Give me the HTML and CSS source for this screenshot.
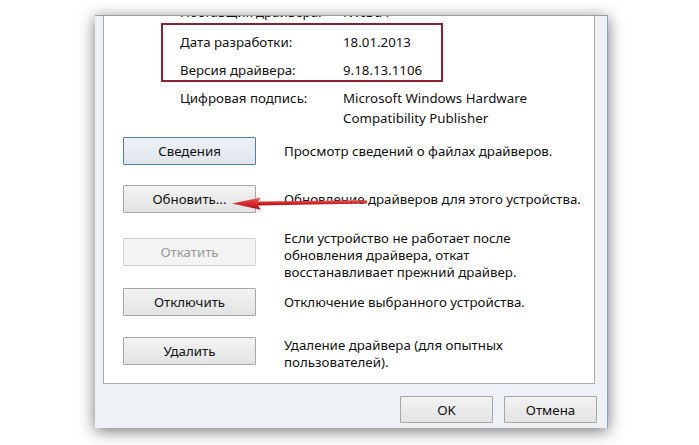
FILE: index.html
```html
<!DOCTYPE html>
<html lang="ru">
<head>
<meta charset="utf-8">
<title>Драйвер</title>
<link rel="stylesheet" href="styles.css">
</head>
<body>
<div class="window">
  <div class="panel">
    <div class="info">
      <div class="row cut"><span class="lbl">Поставщик драйвера:</span><span class="val">NVIDIA</span></div>
      <div class="highlight">
        <div class="row"><span class="lbl">Дата разработки:</span><span class="val">18.01.2013</span></div>
        <div class="row"><span class="lbl">Версия драйвера:</span><span class="val">9.18.13.1106</span></div>
      </div>
      <div class="row sign"><span class="lbl">Цифровая подпись:</span><span class="val">Microsoft Windows Hardware<br>Compatibility Publisher</span></div>
    </div>
    <div class="actions">
      <div class="act a1"><button class="btn default">Сведения</button><p class="desc">Просмотр сведений о файлах драйверов.</p></div>
      <div class="act a2"><button class="btn">Обновить...</button><p class="desc">Обновление драйверов для этого устройства.</p></div>
      <div class="act a3"><button class="btn disabled">Откатить</button><p class="desc multi">Если устройство не работает после<br>обновления драйвера, откат<br>восстанавливает прежний драйвер.</p></div>
      <div class="act a4"><button class="btn">Отключить</button><p class="desc">Отключение выбранного устройства.</p></div>
      <div class="act a5"><button class="btn">Удалить</button><p class="desc multi">Удаление драйвера (для опытных<br>пользователей).</p></div>
    </div>
  </div>
  <div class="footer">
    <button class="btn small">OK</button>
    <button class="btn small">Отмена</button>
  </div>
</div>
<svg class="arrow" width="150" height="20" viewBox="225 194 150 20" xmlns="http://www.w3.org/2000/svg">
  <defs>
    <linearGradient id="ag" x1="0" y1="0" x2="0" y2="1">
      <stop offset="0" stop-color="#f05a5a"/>
      <stop offset="0.5" stop-color="#d9262b"/>
      <stop offset="1" stop-color="#a81418"/>
    </linearGradient>
  </defs>
  <path d="M257 201.6 L367 200.2 L367 203.4 L257 205.4 Z" fill="url(#ag)"/>
  <path d="M232 203.6 L261 197.5 L256.5 203.5 L261 209.8 Z" fill="url(#ag)"/>
</svg>
</body>
</html>
```
FILE: styles.css
```css
html, body {
  margin: 0;
  padding: 0;
  background: #ffffff;
}
body {
  width: 699px;
  height: 445px;
  overflow: hidden;
  font-family: "Noto Sans", "Open Sans", sans-serif;
  font-size: 13.3px;
  color: #111111;
  position: relative;
}
.window {
  margin: 15px 0 0 95px;
  width: 513px;
  height: 413px;
  box-sizing: border-box;
  background: #eef1f5;
  border-top: 1px solid #9c9c9c;
  border-right: 1px solid #7ba3d6;
  box-shadow: 0 3px 15px rgba(0, 0, 0, 0.55);
  display: flex;
  flex-direction: column;
}
.panel {
  margin-left: 8px;
  width: 492px;
  height: 368px;
  box-sizing: border-box;
  background: #ffffff;
  border: 1px solid #a9a9a9;
  border-top: none;
  overflow: hidden;
}
.info {
  margin-top: -14px;
}
.row {
  display: flex;
  line-height: 20px;
  padding-left: 76px;
}
.lbl {
  width: 163px;
  flex: none;
}
.highlight {
  margin: 1px 0 0 57px;
  width: 282px;
  box-sizing: border-box;
  border: 2px solid #8d1f30;
  padding-top: 7px;
}
.highlight .row {
  padding-left: 17px;
}
.highlight .row + .row {
  margin-top: 8px;
}
.sign {
  margin-top: 6px;
}
.actions {
  padding-left: 19px;
}
.act {
  display: flex;
  align-items: flex-start;
}
.a1 { margin-top: 9px; }
.a2 { margin-top: 20px; }
.a3 { margin-top: 17px; }
.a4 { margin-top: 7px; }
.a5 { margin-top: 21px; }
.a3 .btn { margin-top: 8px; }
.desc {
  margin: 0 0 0 28px;
  line-height: 28px;
  white-space: nowrap;
}
.desc.multi { line-height: 17px; }
.btn {
  width: 133px;
  height: 28px;
  flex: none;
  box-sizing: border-box;
  border: 1px solid #a6a6a6;
  border-radius: 1px;
  background: linear-gradient(#f3f3f3, #e3e3e3);
  font-family: inherit;
  font-size: 13.3px;
  color: #111111;
  padding: 0;
}
.btn.default {
  border-color: #4f7ea8;
  background: linear-gradient(#eef2f6, #e0e6ec);
}
.btn.disabled {
  border-color: #d3d3d3;
  background: #f3f3f3;
  color: #9a9a9a;
}
.footer {
  display: flex;
  justify-content: flex-end;
  gap: 11px;
  padding: 12px 10px 0 0;
}
.btn.small {
  width: 93px;
  height: 27px;
}
.arrow {
  position: absolute;
  left: 225px;
  top: 194px;
}
```
